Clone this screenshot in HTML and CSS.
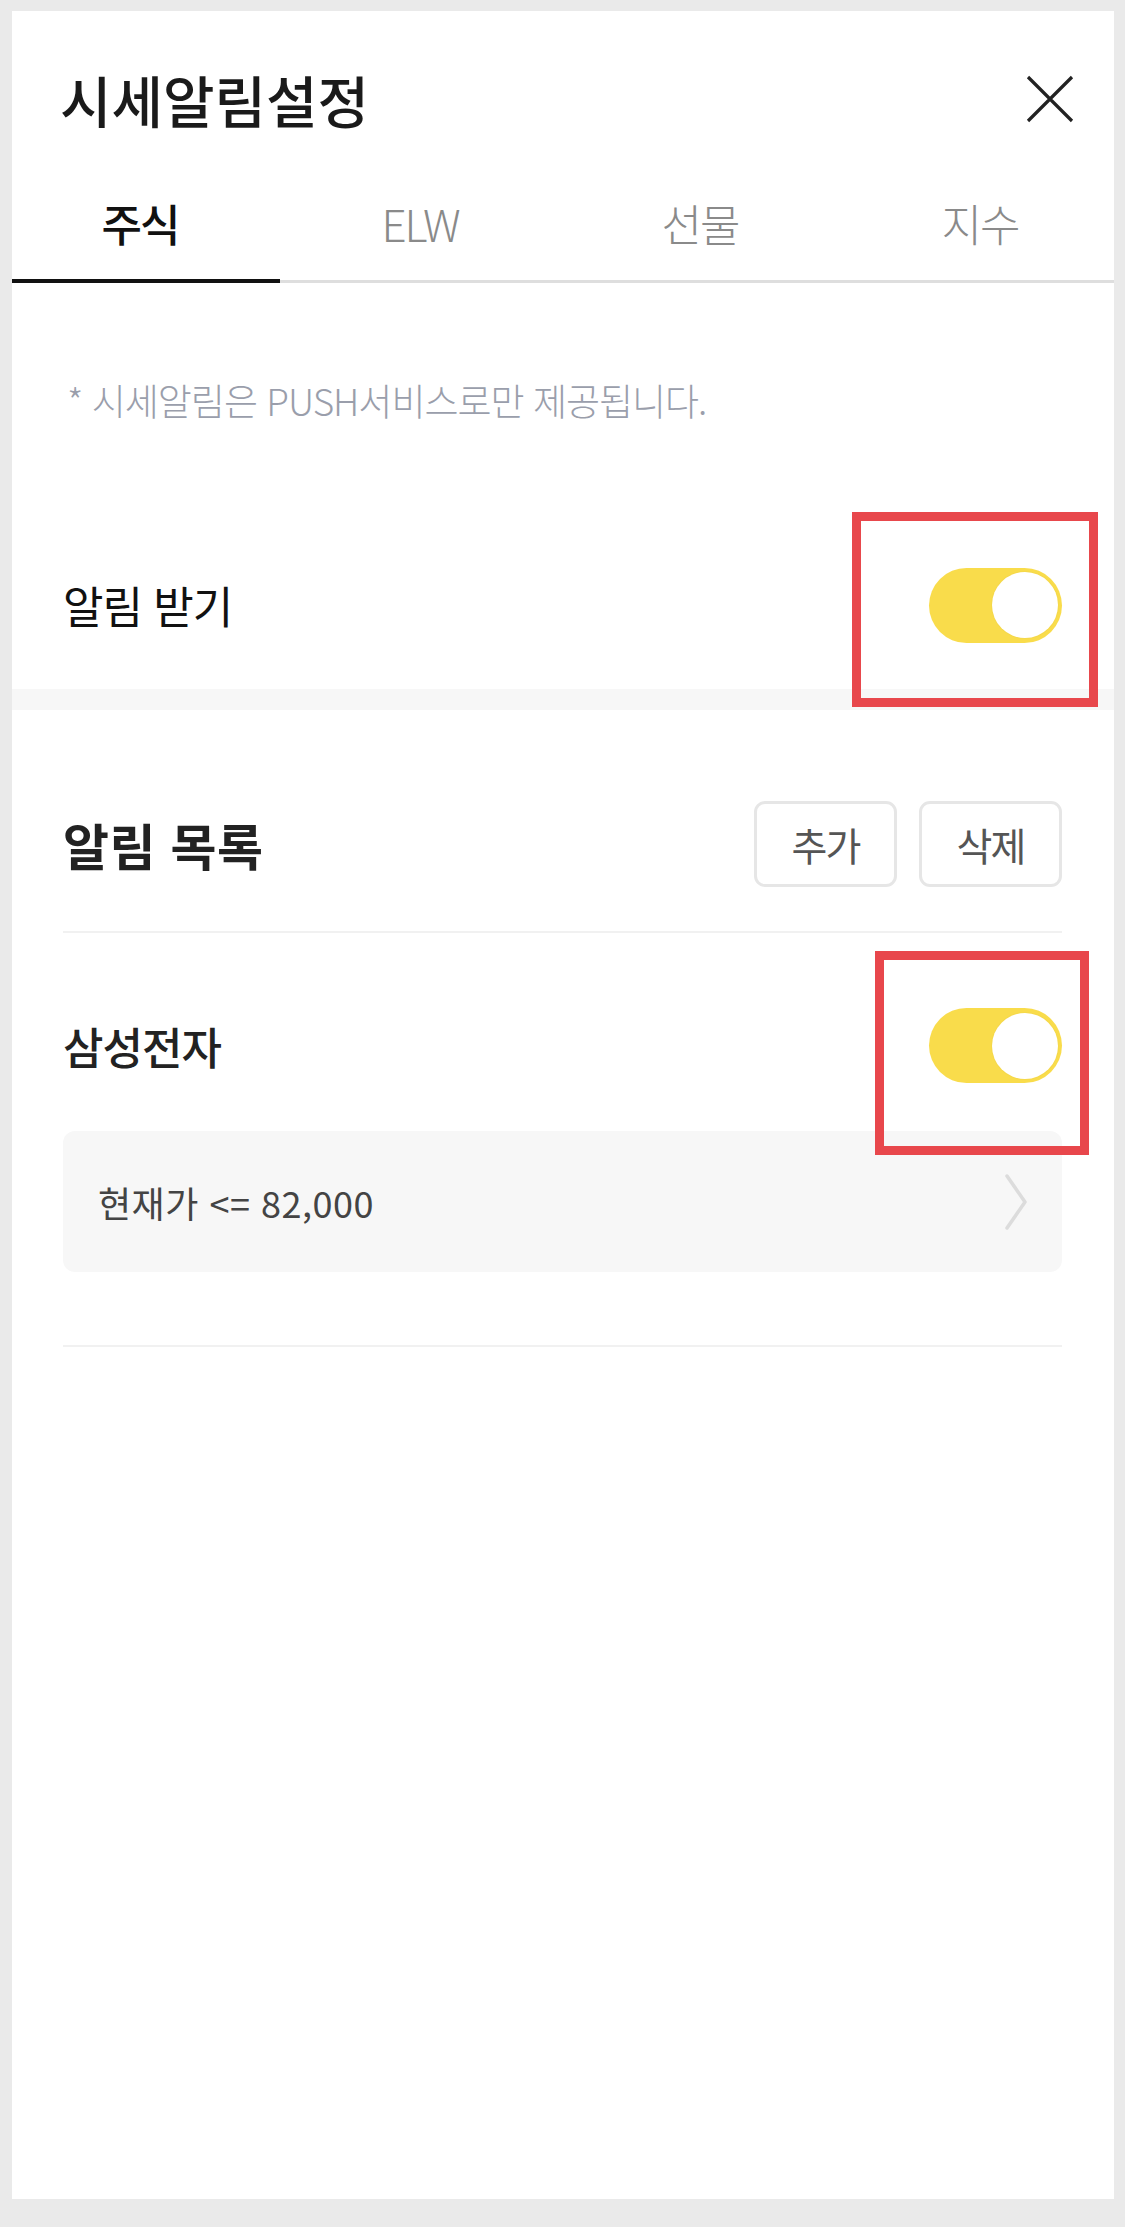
FILE: index.html
```html
<!DOCTYPE html>
<html lang="ko">
<head>
<meta charset="utf-8">
<link rel="stylesheet" href="styles.css">
</head>
<body>
<div class="panel">
  <header class="header">
    <h1 class="title">시세알림설정</h1>
    <button class="close" aria-label="닫기">
      <svg width="48" height="48" viewBox="0 0 48 48"><path d="M2 2 L46 46 M46 2 L2 46" stroke="#222" stroke-width="3.2" fill="none"/></svg>
    </button>
  </header>
  <nav class="tabs">
    <div class="tab active">주식</div>
    <div class="tab">ELW</div>
    <div class="tab">선물</div>
    <div class="tab">지수</div>
  </nav>
  <p class="notice">* 시세알림은 PUSH서비스로만 제공됩니다.</p>
  <div class="setting-row">
    <span class="setting-label">알림 받기</span>
    <div class="toggle"><span class="knob"></span></div>
  </div>
  <div class="band"></div>
  <section class="list">
    <div class="list-head">
      <h2 class="list-title">알림 목록</h2>
      <div class="btns">
        <button class="btn">추가</button>
        <button class="btn">삭제</button>
      </div>
    </div>
    <div class="item">
      <div class="item-row">
        <span class="item-name">삼성전자</span>
        <div class="toggle"><span class="knob"></span></div>
      </div>
      <div class="cond">
        <span class="cond-text">현재가 &lt;= 82,000</span>
        <svg class="chev" width="24" height="58" viewBox="0 0 24 58"><path d="M3 3 L21 29 L3 55" stroke="#dcdcdc" stroke-width="3.5" fill="none" stroke-linecap="round" stroke-linejoin="round"/></svg>
      </div>
    </div>
  </section>
  <div class="mark mark-1"></div>
  <div class="mark mark-2"></div>
</div>
</body>
</html>
```

FILE: styles.css
```css
* { box-sizing: border-box; }
html, body { margin: 0; padding: 0; }
body {
  background: #eaeaea;
  font-family: "Noto Sans CJK KR", "Noto Sans", sans-serif;
  width: 1125px;
  height: 2227px;
  overflow: hidden;
}
.panel {
  position: relative;
  margin: 11px 11px 0 12px;
  height: 2188px;
  background: #fff;
  overflow: hidden;
}
.header {
  height: 176px;
  display: flex;
  align-items: center;
  justify-content: space-between;
  padding: 0 40px 0 48px;
}
.title {
  margin: 0;
  font-size: 56px;
  font-weight: 500;
  letter-spacing: 0;
  color: #1a1a1a;
  line-height: 1;
}
.close {
  border: 0;
  background: none;
  padding: 0;
  width: 48px;
  height: 48px;
  display: flex;
}
.tabs {
  display: grid;
  grid-template-columns: repeat(4, 280px);
  margin-left: -12px;
  height: 96px;
  border-bottom: 3px solid #dedede;
}
.tab {
  position: relative;
  display: flex;
  align-items: center;
  justify-content: center;
  padding-bottom: 22px;
  font-size: 44px;
  letter-spacing: -2px;
  color: #8a8a8a;
  font-weight: 300;
}
.tab.active {
  color: #111;
  font-weight: 500;
}
.tab.active::after {
  content: "";
  position: absolute;
  left: 0;
  right: 0;
  bottom: -3px;
  height: 4px;
  background: #111;
}
.notice {
  margin: 0;
  padding: 94px 0 0 55px;
  height: 238px;
  font-size: 37px;
  line-height: 46px;
  font-weight: 300;
  letter-spacing: -1px;
  color: #9a9eab;
}
.setting-row {
  height: 168px;
  display: flex;
  align-items: center;
  justify-content: space-between;
  padding: 0 52px 0 51px;
}
.setting-label {
  font-size: 44px;
  letter-spacing: -1px;
  color: #111;
}
.toggle {
  width: 133px;
  height: 75px;
  border-radius: 38px;
  background: #f9dc4b;
  display: flex;
  align-items: center;
  justify-content: flex-end;
  padding-right: 4px;
}
.knob {
  width: 66px;
  height: 66px;
  border-radius: 50%;
  background: #fff;
  box-shadow: 0 0 0 1px #f5d84a;
}
.band {
  height: 21px;
  background: #f7f7f7;
}
.list {
  padding: 0 52px 0 51px;
}
.list-head {
  display: flex;
  justify-content: space-between;
  align-items: center;
  padding: 91px 0 44px;
  border-bottom: 2px solid #f1f1f1;
}
.list-title {
  margin: 0;
  font-size: 50px;
  font-weight: 700;
  letter-spacing: 0.5px;
  color: #222;
  line-height: 1;
}
.btns {
  display: flex;
  gap: 22px;
}
.btn {
  width: 143px;
  height: 86px;
  border: 3px solid #e6e6e6;
  border-radius: 11px;
  background: #fff;
  font-family: "Noto Sans CJK KR", "Noto Sans", sans-serif;
  font-size: 39px;
  letter-spacing: -2px;
  color: #555;
  padding: 0;
}
.item {
  padding: 75px 0 73px;
  border-bottom: 2px solid #f1f1f1;
}
.item-row {
  display: flex;
  justify-content: space-between;
  align-items: center;
}
.item-name {
  font-size: 44px;
  font-weight: 500;
  letter-spacing: -1px;
  color: #222;
}
.cond {
  margin-top: 48px;
  height: 141px;
  border-radius: 12px;
  background: #f7f7f7;
  display: flex;
  align-items: center;
  justify-content: space-between;
  padding: 0 34px 0 35px;
}
.cond-text {
  font-size: 36px;
  letter-spacing: 0.5px;
  color: #444;
}
.mark {
  position: absolute;
  border: 9px solid #e8474c;
}
.mark-1 { left: 840px; top: 501px; width: 246px; height: 195px; }
.mark-2 { left: 863px; top: 940px; width: 214px; height: 204px; }
```
